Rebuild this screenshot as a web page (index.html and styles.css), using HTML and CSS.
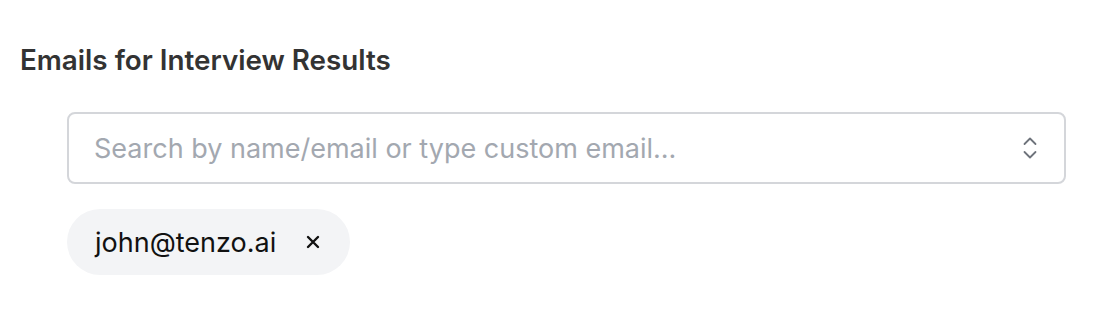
FILE: index.html
```html
<!DOCTYPE html>
<html>
<head>
<meta charset="utf-8">
<link rel="stylesheet" href="styles.css">
</head>
<body>
<div class="page">
  <h2 class="title">Emails for Interview Results</h2>
  <div class="field">
    <div class="select">
      <span class="placeholder">Search by name/email or type custom email...</span>
      <svg class="chevrons" width="16" height="24" viewBox="0 0 16 24" fill="none" stroke="currentColor" stroke-width="1.8" stroke-linecap="round" stroke-linejoin="round">
        <path d="M2.5 8 L8 2.5 L13.5 8"/>
        <path d="M2.5 16 L8 21.5 L13.5 16"/>
      </svg>
    </div>
    <div class="chips">
      <span class="chip">john@tenzo.ai
        <svg class="x" width="14" height="14" viewBox="0 0 14 14" stroke="currentColor" stroke-width="2.4" stroke-linecap="round">
          <path d="M2 2 L12 12 M12 2 L2 12"/>
        </svg>
      </span>
    </div>
  </div>
</div>
</body>
</html>
```

FILE: styles.css
```css
html, body {
  margin: 0;
  padding: 0;
  background: #ffffff;
}
body {
  font-family: Inter, "Noto Sans", sans-serif;
}
.page {
  padding: 44px 20px 0 20px;
}
.title {
  margin: 0;
  font-size: 27.8px;
  line-height: 32px;
  font-weight: 600;
  color: #333333;
}
.field {
  margin: 36px 12px 0 47px;
}
.select {
  height: 68px;
  border: 2px solid #d4d6da;
  border-radius: 8px;
  display: flex;
  align-items: center;
  justify-content: space-between;
  padding: 0 26px 0 25px;
}
.placeholder {
  font-size: 27px;
  color: #a3a8b0;
}
.chevrons {
  color: #6e737b;
}
.chips {
  margin-top: 25px;
  display: flex;
}
.chip {
  display: inline-flex;
  align-items: center;
  gap: 30px;
  height: 66px;
  padding: 0 30px 0 28px;
  background: #f3f4f6;
  border-radius: 33px;
  font-size: 27px;
  color: #111111;
}
.x {
  color: #111111;
}
```
